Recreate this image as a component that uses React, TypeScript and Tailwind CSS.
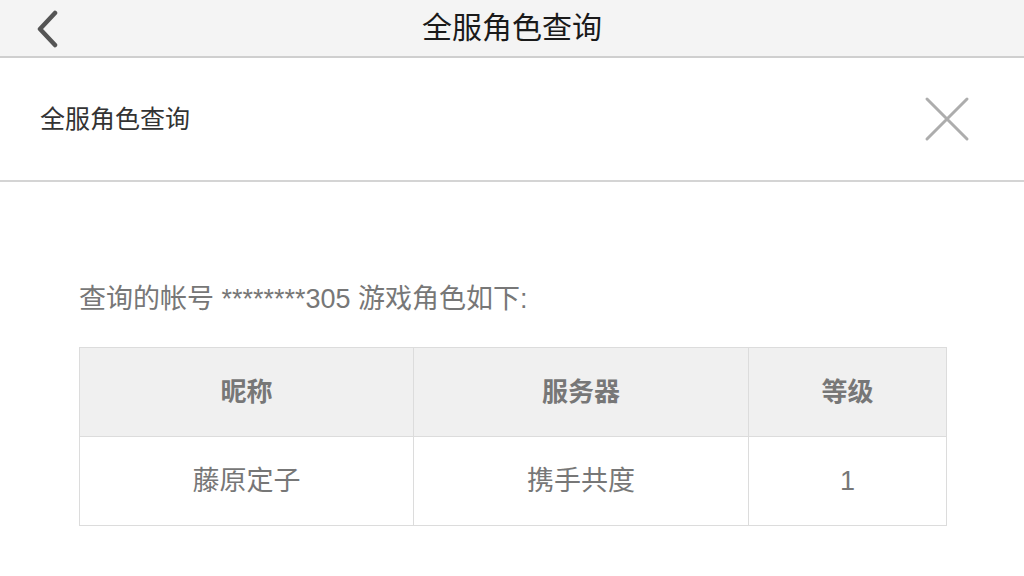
export default function App() {
  const font = { fontFamily: '"Liberation Sans", "Noto Sans CJK SC", sans-serif' };
  return (
    <div className="w-[1024px] h-[576px] bg-white overflow-hidden" style={font}>
      {/* nav bar */}
      <div className="relative h-[58px] bg-[#f4f4f4] border-b-2 border-[#cfcfcf] flex items-center justify-center">
        <svg className="absolute left-[34px] top-[10px]" width="28" height="38" viewBox="0 0 28 38">
          <path d="M21 3 L6 19 L21 35" fill="none" stroke="#555" strokeWidth="4.5" strokeLinecap="round" strokeLinejoin="round" />
        </svg>
        <span className="text-[30px] text-[#1a1a1a] leading-none">全服角色查询</span>
      </div>

      {/* dialog header */}
      <div className="h-[124px] border-b-2 border-[#d4d4d4] flex items-center justify-between pl-[40px] pr-[54px]">
        <span className="text-[25px] text-[#333] leading-none">全服角色查询</span>
        <svg width="46" height="46" viewBox="0 0 46 46">
          <path d="M3 3 L43 43 M43 3 L3 43" stroke="#adadad" strokeWidth="3" strokeLinecap="round" />
        </svg>
      </div>

      <div className="px-[79px] pt-[104px]">
        <p className="text-[27px] text-[#777] leading-none">查询的帐号 ********305 游戏角色如下:</p>
        <table className="mt-[34px] w-[867px] border-collapse text-[27px] text-[#777] table-fixed">
          <colgroup>
            <col className="w-[334px]" />
            <col className="w-[335px]" />
            <col className="w-[198px]" />
          </colgroup>
          <thead>
            <tr className="bg-[#f0f0f0] h-[89px]">
              <th className="border border-[#dcdcdc] font-bold text-[26px]">昵称</th>
              <th className="border border-[#dcdcdc] font-bold text-[26px]">服务器</th>
              <th className="border border-[#dcdcdc] font-bold text-[26px]">等级</th>
            </tr>
          </thead>
          <tbody>
            <tr className="h-[89px]">
              <td className="border border-[#dcdcdc] text-center">藤原定子</td>
              <td className="border border-[#dcdcdc] text-center">携手共度</td>
              <td className="border border-[#dcdcdc] text-center">1</td>
            </tr>
          </tbody>
        </table>
      </div>
    </div>
  );
}
